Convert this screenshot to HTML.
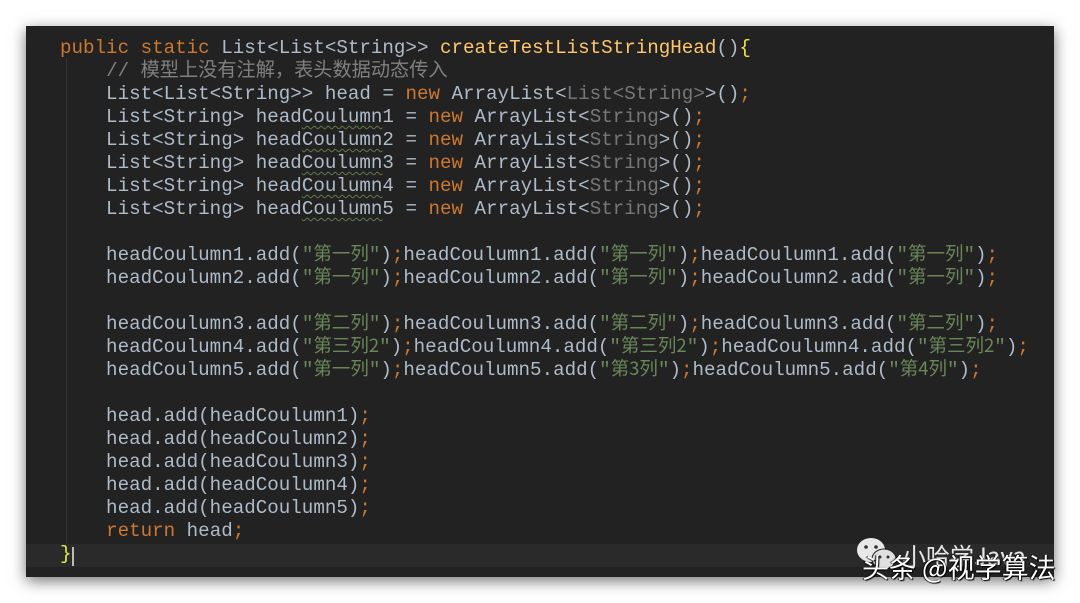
<!DOCTYPE html>
<html><head><meta charset="utf-8"><style>
html,body{margin:0;padding:0;width:1080px;height:603px;background:#fff;overflow:hidden}
.ed{position:absolute;left:26px;top:26px;width:1028px;height:551px;background:#222222;box-shadow:0 4px 14px rgba(0,0,0,.55)}
.cur{position:absolute;left:26px;top:544px;width:1028px;height:23px;background:#2a2a2a}
.guide{position:absolute;left:66px;top:58px;width:1px;height:486px;background:#333}
.code{position:absolute;left:60px;top:37px;font-family:"Liberation Mono","Noto Sans CJK SC",monospace;font-size:19.2px;line-height:23px;color:#aebbc9;white-space:pre}
.code div{height:23px}
.k{color:#cc7832}.f{color:#ffc66d}.c{color:#808080;line-height:10px}.s{color:#6a8759}
.z{font-family:"Noto Sans CJK SC",sans-serif;font-size:18.5px;line-height:10px}
.u{text-decoration:underline wavy #5d7a4a;text-decoration-thickness:1px;text-underline-offset:3px}
.g{color:#777}
.y{color:#e8e84a}
.wm{position:absolute;left:862px;top:547px;font-family:"Noto Sans CJK SC",sans-serif;font-size:27px;color:#fff;text-shadow:1px 1px 1px #000,-1px 0 1px #000}
.wm2{position:absolute;left:902px;top:537px;font-family:"Noto Sans CJK SC",sans-serif;font-size:24px;color:#e6e6e6}
</style></head><body>
<div class="ed"></div><div class="cur"></div><div class="guide"></div>
<div class="code"><div><span class="k">public static</span> List&lt;List&lt;String&gt;&gt; <span class="f">createTestListStringHead</span>()<span class="y">{</span></div><div>    <span class="c">// 模型上没有注解，表头数据动态传入</span></div><div>    List&lt;List&lt;String&gt;&gt; head = <span class="k">new</span> ArrayList&lt;<span class="g">List&lt;String&gt;</span>&gt;()<span class="k">;</span></div><div>    List&lt;String&gt; head<span class="u">Coulumn</span>1 = <span class="k">new</span> ArrayList&lt;<span class="g">String</span>&gt;()<span class="k">;</span></div><div>    List&lt;String&gt; head<span class="u">Coulumn</span>2 = <span class="k">new</span> ArrayList&lt;<span class="g">String</span>&gt;()<span class="k">;</span></div><div>    List&lt;String&gt; head<span class="u">Coulumn</span>3 = <span class="k">new</span> ArrayList&lt;<span class="g">String</span>&gt;()<span class="k">;</span></div><div>    List&lt;String&gt; head<span class="u">Coulumn</span>4 = <span class="k">new</span> ArrayList&lt;<span class="g">String</span>&gt;()<span class="k">;</span></div><div>    List&lt;String&gt; head<span class="u">Coulumn</span>5 = <span class="k">new</span> ArrayList&lt;<span class="g">String</span>&gt;()<span class="k">;</span></div><div> </div><div>    headCoulumn1.add(<span class="s">"<span class="z">第一列</span>"</span>)<span class="k">;</span>headCoulumn1.add(<span class="s">"<span class="z">第一列</span>"</span>)<span class="k">;</span>headCoulumn1.add(<span class="s">"<span class="z">第一列</span>"</span>)<span class="k">;</span></div><div>    headCoulumn2.add(<span class="s">"<span class="z">第一列</span>"</span>)<span class="k">;</span>headCoulumn2.add(<span class="s">"<span class="z">第一列</span>"</span>)<span class="k">;</span>headCoulumn2.add(<span class="s">"<span class="z">第一列</span>"</span>)<span class="k">;</span></div><div> </div><div>    headCoulumn3.add(<span class="s">"<span class="z">第二列</span>"</span>)<span class="k">;</span>headCoulumn3.add(<span class="s">"<span class="z">第二列</span>"</span>)<span class="k">;</span>headCoulumn3.add(<span class="s">"<span class="z">第二列</span>"</span>)<span class="k">;</span></div><div>    headCoulumn4.add(<span class="s">"<span class="z">第三列2</span>"</span>)<span class="k">;</span>headCoulumn4.add(<span class="s">"<span class="z">第三列2</span>"</span>)<span class="k">;</span>headCoulumn4.add(<span class="s">"<span class="z">第三列2</span>"</span>)<span class="k">;</span></div><div>    headCoulumn5.add(<span class="s">"<span class="z">第一列</span>"</span>)<span class="k">;</span>headCoulumn5.add(<span class="s">"<span class="z">第3列</span>"</span>)<span class="k">;</span>headCoulumn5.add(<span class="s">"<span class="z">第4列</span>"</span>)<span class="k">;</span></div><div> </div><div>    head.add(headCoulumn1)<span class="k">;</span></div><div>    head.add(headCoulumn2)<span class="k">;</span></div><div>    head.add(headCoulumn3)<span class="k">;</span></div><div>    head.add(headCoulumn4)<span class="k">;</span></div><div>    head.add(headCoulumn5)<span class="k">;</span></div><div>    <span class="k">return</span> head<span class="k">;</span></div><div><span class="y">}</span></div></div>
<div style="position:absolute;left:72px;top:547px;width:2px;height:19px;background:#bbb"></div>
<svg style="position:absolute;left:856px;top:537px" width="46" height="36" viewBox="0 0 46 36">
<ellipse cx="15" cy="13" rx="14" ry="12" fill="#e8e8e8"/>
<ellipse cx="28" cy="22" rx="12" ry="10" fill="#e0e0e0" stroke="#222" stroke-width="1"/>
<circle cx="10" cy="10" r="1.8" fill="#333"/><circle cx="20" cy="10" r="1.8" fill="#333"/>
<circle cx="24" cy="20" r="1.5" fill="#333"/><circle cx="32" cy="20" r="1.5" fill="#333"/>
</svg>
<div class="wm2">小哈学Java</div>
<div class="wm">头条 @视学算法</div>
</body></html>
